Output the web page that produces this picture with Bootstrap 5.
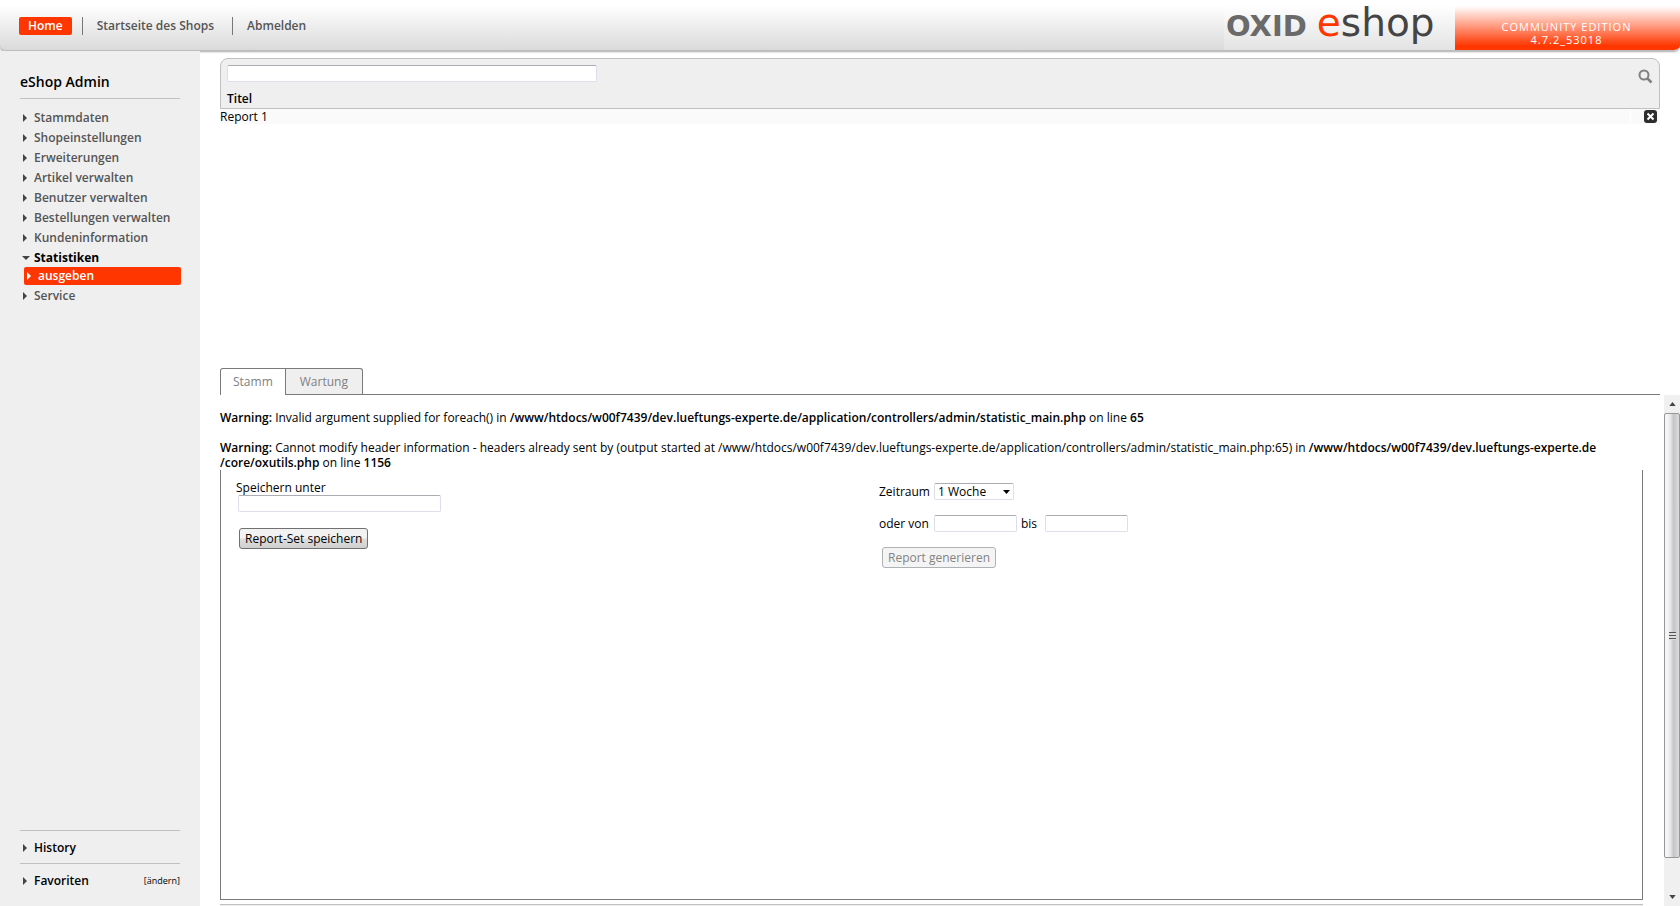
<!DOCTYPE html>
<html lang="de">
<head>
<meta charset="utf-8">
<meta name="viewport" content="width=device-width, initial-scale=1">
<title>OXID eShop Admin</title>
<link href="https://cdn.jsdelivr.net/npm/bootstrap@5.3.0/dist/css/bootstrap.min.css" rel="stylesheet">
<style>
  :root { --accent: #ff3600; --panel: #efefef; --line: #c0c0c0; --frame: #7a7a7a; }
  body { font: 12px/15px "Open Sans", sans-serif; color: #000; background: #fff; }
  a { color: inherit; text-decoration: none; }

  /* top bar */
  .topwrap { background: linear-gradient(to right, var(--panel) 200px, #fff 200px); }
  .topbar { height: 51px; background: linear-gradient(#fff 10%, #dadada); border-radius: 0 0 6px 6px; border-bottom: 1px solid #bdbdbd; box-shadow: 0 1px 2px #aaa; overflow: hidden; }
  .topnav { color: #555; font-weight: 600; line-height: 18px; padding: 2px 0 0 19px; }
  .topnav li + li { border-left: 1px solid #777; margin-left: 10px; padding-left: 14px; }
  .topnav li:last-child { margin-left: 18px; }
  .home { background: var(--accent); color: #fff; border-radius: 2px; padding: 0 9px; display: block; }
  .logo { width: 231px; background: linear-gradient(#fff 10%, #e3e3e3); padding-left: 2px; line-height: 46px; font-family: "DejaVu Sans", sans-serif; white-space: nowrap; }
  .logo-a { font-size: 29px; font-weight: 700; color: #6a6a6a; }
  .logo-b { font-size: 39px; color: #444; margin-left: 10px; }
  .logo-b span { color: var(--accent); }
  .edition { width: 225px; background: linear-gradient(#fff 12%, var(--accent) 92%); color: #fff; font-size: 11px; line-height: 13px; letter-spacing: 1px; padding-top: 20px; padding-right: 2px; }

  /* sidebar */
  .side { width: 200px; background: var(--panel); padding: 22px 20px 10px; }
  .side h1 { font-size: 14px; line-height: 18px; font-weight: 600; padding-bottom: 7px; border-bottom: 1px solid var(--line); margin-bottom: 9px; }
  .menu a, .fold { display: flex; align-items: center; line-height: 20px; }
  .menu a { color: #555; font-weight: 600; }
  .menu svg, .fold svg { width: 8px; height: 8px; margin: 0 4px 0 2px; fill: #444; }
  .menu a.open { color: #000; font-weight: 700; }
  .menu a.here { background: var(--accent); color: #fff; border-radius: 2px; line-height: 18px; margin: -1px -1px 1px 4px; }
  .menu a.here svg { fill: #fff; }
  .fold { border-top: 1px solid var(--line); padding: 7px 0 5px; font-weight: 600; }
  .fold a.edit { font-size: 9px; font-weight: 400; }

  /* list */
  .listpane { flex: 0 0 317px; padding: 7px 20px 0; }
  .filter { background: var(--panel); border: 1px solid var(--line); border-radius: 8px 8px 0 0; padding: 6px 6px 2px; height: 51px; }
  .field { border: 1px solid #dde0ea; border-top-color: #abadb3; border-radius: 2px; background: #fff; height: 17px; padding: 0 3px; font: inherit; color: #000; }
  .filter .field { width: 370px; }
  .hits td { padding: 0; background: #fafafa; line-height: 15px; }
  .hits .act { width: 30px; border-left: 1px solid #fff; padding-left: 13px; }
  .bare { border: 0; background: none; padding: 0; display: block; line-height: 0; }

  /* tabs */
  .tabrow { margin: 0 20px; border-bottom: 1px solid var(--frame); }
  .tabrow a { color: #808080; line-height: 25px; padding: 0 12px; border: 1px solid var(--frame); border-bottom: 0; background: var(--panel); border-radius: 0 3px 0 0; }
  .tabrow a + a { border-left: 0; padding: 0 14px; }
  .tabrow a.now { background: #fff; border-radius: 3px 0 0 0; margin-bottom: -1px; }

  /* edit pane */
  .pane { padding: 15px 21px 0 20px; }
  .pane p { margin: 0 0 15px; }
  .pane b { font-weight: 600; }
  .pane p.tail { margin: 0; }
  .box { border: 1px solid var(--frame); border-top: 0; padding: 10px 15px; display: grid; grid-template-columns: 6fr 7fr; }
  .foot { height: 2px; margin-top: 4px; border-top: 1px solid var(--line); background: var(--panel); }
  .save { width: 203px; margin-left: 2px; display: block; }
  .push { font: inherit; line-height: 17px; border: 1px solid #707070; border-radius: 3px; padding: 1px 5px; margin-left: 3px; background: linear-gradient(#f2f2f2 45%, #ddd 55%, #cfcfcf); color: #000; }
  .push:disabled { color: #838383; border-color: #adb2b5; background: #f4f4f4; }
  .range { padding: 3px 0 0 1px; }
  .range .line { margin-bottom: 15px; }
  .period { width: 80px; appearance: none; }
  .arrow { position: absolute; right: 4px; top: 7px; width: 7px; height: 4px; pointer-events: none; }
  .lab { width: 55px; }
  .date { width: 83px; }

  /* scrollbar */
  .bar { width: 16px; background: #f0f0f0; }
  .bar svg { width: 7px; height: 4px; fill: #444; }
  .bar .cap { height: 18px; }
  .bar .run { flex: 0 1 445px; border: 1px solid #979797; border-radius: 2px; background: linear-gradient(to right, #f5f5f5 20%, #e0e0e3 45%, #c5c5c9 60%, #dcdcdc); }
  .grip { width: 7px; height: 8px; background: repeating-linear-gradient(#555 0 1px, #ddd 1px 3px); }
</style>
</head>
<body class="d-flex flex-column min-vh-100">
<svg class="d-none"><symbol id="right" viewBox="0 0 8 8"><path d="M1 0L5 4L1 8Z"/></symbol><symbol id="down" viewBox="0 0 8 8"><path d="M0 2H8L4 6Z"/></symbol></svg>
<div class="topwrap">
<header class="topbar d-flex">
  <ul class="topnav list-unstyled d-flex align-items-center flex-grow-1 mb-0">
    <li><a class="home" href="#">Home</a></li>
    <li><a href="#">Startseite des Shops</a></li>
    <li><a href="#">Abmelden</a></li>
  </ul>
  <div class="logo"><span class="logo-a">OXID</span><span class="logo-b"><span>e</span>shop</span></div>
  <div class="edition text-center"><div>COMMUNITY EDITION</div><div>4.7.2_53018</div></div>
</header>
</div>
<div class="d-flex flex-grow-1">
  <nav class="side d-flex flex-column flex-shrink-0">
    <h1>eShop Admin</h1>
    <ul class="menu list-unstyled mb-auto">
      <li><a href="#"><svg><use href="#right"/></svg>Stammdaten</a></li>
      <li><a href="#"><svg><use href="#right"/></svg>Shopeinstellungen</a></li>
      <li><a href="#"><svg><use href="#right"/></svg>Erweiterungen</a></li>
      <li><a href="#"><svg><use href="#right"/></svg>Artikel verwalten</a></li>
      <li><a href="#"><svg><use href="#right"/></svg>Benutzer verwalten</a></li>
      <li><a href="#"><svg><use href="#right"/></svg>Bestellungen verwalten</a></li>
      <li><a href="#"><svg><use href="#right"/></svg>Kundeninformation</a></li>
      <li><a class="open" href="#"><svg><use href="#down"/></svg>Statistiken</a></li>
      <li><a class="here" href="#"><svg><use href="#right"/></svg>ausgeben</a></li>
      <li><a href="#"><svg><use href="#right"/></svg>Service</a></li>
    </ul>
    <div class="fold"><svg><use href="#right"/></svg><a href="#">History</a></div>
    <div class="fold"><svg><use href="#right"/></svg><a href="#">Favoriten</a><a class="edit ms-auto" href="#">[ändern]</a></div>
  </nav>
  <main class="d-flex flex-column flex-grow-1">
    <section class="listpane">
      <div class="filter d-flex justify-content-between">
        <div class="d-flex flex-column justify-content-between">
          <input class="field" id="title">
          <label class="fw-semibold" for="title">Titel</label>
        </div>
        <button class="bare align-self-start mt-1" aria-label="Suchen"><svg width="16" height="16" viewBox="0 0 16 16" fill="none" stroke="#808080"><circle cx="7" cy="6" r="4.5" stroke-width="2"/><path d="M10 9L14.500 13.500" stroke-width="2.500"/></svg></button>
      </div>
      <table class="hits w-100">
        <tr><td><a href="#">Report 1</a></td><td class="act"><button class="bare" aria-label="Löschen"><svg width="13" height="13" viewBox="0 0 13 13"><rect width="13" height="13" rx="3" fill="#2c2c2c"/><path d="M3.500 3.500L9.500 9.500M9.500 3.500L3.500 9.500" stroke="#fff" stroke-width="2"/></svg></button></td></tr>
      </table>
    </section>
    <nav class="tabrow d-flex"><a class="now" href="#">Stamm</a><a href="#">Wartung</a></nav>
    <div class="d-flex flex-grow-1">
      <section class="pane d-flex flex-column flex-grow-1">
        <p><b>Warning:</b> Invalid argument supplied for foreach() in <b>/www/htdocs/w00f7439/dev.lueftungs-experte.de/application/controllers/admin/statistic_main.php</b> on line <b>65</b></p>
        <p class="tail"><b>Warning:</b> Cannot modify header information - headers already sent by (output started at /www/htdocs/w00f7439/dev.lueftungs-experte.de/application/controllers/admin/statistic_main.php:65) in <b>/www/htdocs/w00f7439/dev.lueftungs-experte.de<wbr>/core/oxutils.php</b> on line <b>1156</b></p>
        <form class="box flex-grow-1">
          <div>
            <label for="save">Speichern unter</label>
            <input class="field save" id="save">
            <button class="push mt-3" type="button">Report-Set speichern</button>
          </div>
          <div class="range">
            <div class="line d-flex align-items-center"><label class="lab" for="period">Zeitraum</label><div class="position-relative d-flex"><select class="field period" id="period"><option>1 Woche</option></select><svg class="arrow" viewBox="0 0 7 4"><path d="M0 0H7L3.500 4Z"/></svg></div></div>
            <div class="line d-flex align-items-center"><label class="lab" for="from">oder von</label><input class="field date" id="from"><label class="ps-1 pe-2" for="to">bis</label><input class="field date" id="to"></div>
            <button class="push" type="button" disabled>Report generieren</button>
          </div>
        </form>
        <div class="foot"></div>
      </section>
      <div class="bar d-flex flex-column flex-shrink-0" aria-hidden="true">
        <div class="cap d-flex align-items-center justify-content-center"><svg viewBox="0 0 8 5"><path d="M0 5L4 0L8 5Z"/></svg></div>
        <div class="run d-flex align-items-center justify-content-center"><div class="grip"></div></div>
        <div class="cap d-flex align-items-center justify-content-center mt-auto"><svg viewBox="0 0 8 5"><path d="M0 0H8L4 5Z"/></svg></div>
      </div>
    </div>
  </main>
</div>
<script src="https://cdn.jsdelivr.net/npm/bootstrap@5.3.0/dist/js/bootstrap.bundle.min.js"></script>
</body>
</html>
